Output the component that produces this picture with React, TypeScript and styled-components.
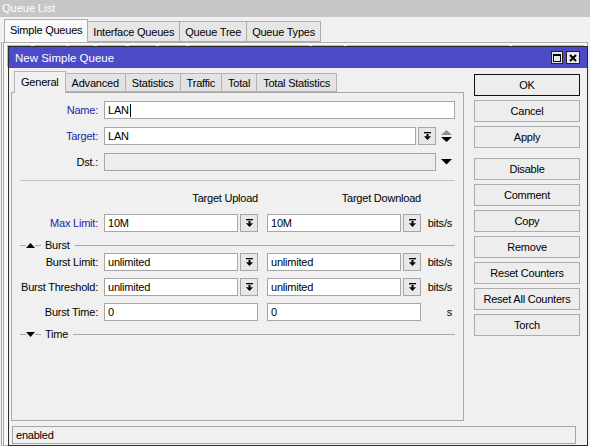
import React from 'react';
import styled, { createGlobalStyle } from 'styled-components';

const GlobalStyle = createGlobalStyle`
  html, body {
    margin: 0;
    padding: 0;
    background: #f0f0f0;
  }
  body {
    font-family: "Liberation Sans", Arial, sans-serif;
    font-size: 11px;
    letter-spacing: -0.22px;
    color: #000;
  }
`;

const Screen = styled.div`
  position: relative;
  width: 590px;
  height: 446px;
  overflow: hidden;
  background: #f0f0f0;
`;

/* ---------- Queue List window (behind) ---------- */
const ListWindow = styled.div`
  display: flex;
  flex-direction: column;
  height: 100%;
`;

const ListTitle = styled.div`
  height: 17px;
  line-height: 17px;
  padding-left: 2px;
  background: #c6c6c6;
  color: #fff;
  letter-spacing: 0;
`;

const TabStrip = styled.div<{ $inset: number }>`
  display: flex;
  align-items: flex-end;
  padding-left: ${(p) => p.$inset}px;
`;

const OuterTabs = styled(TabStrip)`
  height: 25px;
`;

const OuterTab = styled.div<{ $active?: boolean }>`
  height: ${(p) => (p.$active ? 23 : 21)}px;
  line-height: ${(p) => (p.$active ? 21 : 20)}px;
  padding: 0 5px;
  box-sizing: border-box;
  border: 1px solid #acacac;
  border-bottom: ${(p) => (p.$active ? 'none' : '1px solid #acacac')};
  background: ${(p) => (p.$active ? '#f9f9f9' : '#e6e6e6')};
  margin-right: -1px;
  position: relative;
  z-index: ${(p) => (p.$active ? 1 : 0)};
`;

const ListBody = styled.div`
  flex: 1;
  margin: 0 2px 0 1px;
  border: 1px solid #acacac;
  border-left: 3px double #a8a8a8;
  background: #f9f9f9;
`;

const ListToolbar = styled.div`
  display: flex;
  gap: 3px;
  padding: 2px 3px;
`;

const ToolBtn = styled.div<{ $w: number }>`
  width: ${(p) => p.$w}px;
  height: 20px;
  border: 1px solid #b8b8b8;
  background: #ececec;
`;

/* ---------- dialog ---------- */
const Dialog = styled.div`
  position: absolute;
  left: 8px;
  top: 46px;
  width: 580px;
  height: 400px;
  box-sizing: border-box;
  border: 1px solid #2c2c2c;
  background: #f0f0f0;
  display: flex;
  flex-direction: column;
`;

const TitleBar = styled.div`
  height: 21px;
  flex: none;
  background: #4b4bc8;
  color: #fff;
  display: flex;
  align-items: center;
  justify-content: space-between;
  padding: 0 7px 0 6px;
  font-size: 11.5px;
  letter-spacing: 0;
`;

const WinControls = styled.div`
  display: flex;
  gap: 3px;
`;

const WinBtn = styled.div<{ $w: number }>`
  width: ${(p) => p.$w}px;
  height: 13px;
  box-sizing: border-box;
  border: 1px solid #222;
  background: #e9e9e9;
  display: flex;
  align-items: center;
  justify-content: center;
`;

const DialogBody = styled.div`
  flex: 1;
  display: grid;
  grid-template-columns: 453px 106px;
  grid-template-rows: auto auto;
  column-gap: 10px;
  padding: 3px 7px 1px 2px;
`;

const LeftCol = styled.div`
  display: flex;
  flex-direction: column;
`;

const DialogTabs = styled(TabStrip)`
  height: 21px;
`;

const DialogTab = styled.div<{ $active?: boolean }>`
  height: ${(p) => (p.$active ? 22 : 19)}px;
  line-height: ${(p) => (p.$active ? 20 : 18)}px;
  padding: 0 6px;
  box-sizing: border-box;
  border: 1px solid #b3b3b3;
  border-bottom: ${(p) => (p.$active ? 'none' : '1px solid #b3b3b3')};
  background: ${(p) => (p.$active ? '#f0f0f0' : '#e3e3e3')};
  margin-right: -1px;
  margin-bottom: ${(p) => (p.$active ? -1 : 0)}px;
  position: relative;
  z-index: ${(p) => (p.$active ? 1 : 0)};
`;

const Panel = styled.div`
  height: 329px;
  box-sizing: border-box;
  border: 1px solid #a9a9a9;
  background: #f0f0f0;
  padding: 8px 8px 0 6px;
  display: flex;
  flex-direction: column;
`;

const Row = styled.div<{ $top?: number }>`
  display: flex;
  align-items: center;
  height: 18px;
  margin-top: ${(p) => p.$top ?? 0}px;
`;

const Label = styled.div<{ $blue?: boolean }>`
  width: 80px;
  margin-right: 6px;
  text-align: right;
  white-space: nowrap;
  color: ${(p) => (p.$blue ? '#1f1fa6' : '#000')};
`;

const Field = styled.div<{ $w?: number }>`
  display: flex;
  gap: 2px;
  height: 18px;
  ${(p) => (p.$w ? `width: ${p.$w}px;` : 'flex: 1;')}
`;

const Input = styled.div<{ $disabled?: boolean }>`
  flex: 1;
  height: 18px;
  box-sizing: border-box;
  border: 1px solid #a6a6a6;
  background: ${(p) => (p.$disabled ? '#ededed' : '#fff')};
  padding: 0 3px;
  line-height: 16px;
  display: flex;
  align-items: center;
  white-space: nowrap;
  overflow: hidden;
`;

const Caret = styled.span`
  display: inline-block;
  width: 1px;
  height: 13px;
  background: #000;
  margin-left: 1px;
`;

const DropBtn = styled.div`
  width: 18px;
  height: 18px;
  box-sizing: border-box;
  border: 1px solid #a6a6a6;
  background: #e7e7e7;
  display: flex;
  align-items: center;
  justify-content: center;
`;

const SideIcon = styled.div`
  width: 19px;
  height: 18px;
  padding-left: 5px;
  box-sizing: border-box;
  display: flex;
  align-items: center;
`;

const Gap = styled.div<{ $w: number }>`
  width: ${(p) => p.$w}px;
  flex: none;
`;

const Unit = styled.div`
  width: 29px;
  padding-right: 3px;
  box-sizing: border-box;
  text-align: right;
`;

const ColHead = styled.div`
  width: 154px;
  text-align: right;
`;

const Separator = styled.div<{ $top: number }>`
  height: 1px;
  margin: ${(p) => p.$top}px 0 0 2px;
  background: #c4c4c4;
`;

const Section = styled.div<{ $top: number }>`
  display: flex;
  align-items: center;
  height: 12px;
  margin: ${(p) => p.$top}px 0 0 2px;
`;

const Rule = styled.div<{ $w?: number }>`
  height: 1px;
  background: #a8a8a8;
  ${(p) => (p.$w ? `width: ${p.$w}px;` : 'flex: 1;')}
`;

const SectionText = styled.span`
  margin: 0 5px 0 4px;
`;

const Buttons = styled.div`
  display: flex;
  flex-direction: column;
  padding-top: 3px;
`;

const Button = styled.div<{ $default?: boolean; $top?: number }>`
  height: 22px;
  box-sizing: border-box;
  margin-top: ${(p) => p.$top ?? 4}px;
  border: 1px solid ${(p) => (p.$default ? '#111' : '#acacac')};
  background: #ededed;
  display: flex;
  align-items: center;
  justify-content: center;
`;

const StatusBar = styled.div`
  grid-column: 1 / -1;
  height: 18px;
  box-sizing: border-box;
  margin: 5px 4px 0 1px;
  border: 1px solid #a6a6a6;
  padding-left: 3px;
  line-height: 16px;
`;

/* ---------- icons ---------- */
const DropIcon = () => (
  <svg width="7" height="8" viewBox="0 0 7 8">
    <rect x="0" y="0" width="7" height="1.3" fill="#000" />
    <rect x="2.5" y="2" width="2" height="2.5" fill="#000" />
    <path d="M0 4.2 H7 L3.5 8 Z" fill="#000" />
  </svg>
);

const UpDownIcon = () => (
  <svg width="11" height="14" viewBox="0 0 11 14">
    <path d="M0 6 L5.5 1 L11 6 Z" fill="#8e8e8e" />
    <path d="M0 8 H11 L5.5 13 Z" fill="#000" />
  </svg>
);

const DownIcon = () => (
  <svg width="11" height="6" viewBox="0 0 11 6">
    <path d="M0 0 H11 L5.5 5.5 Z" fill="#000" />
  </svg>
);

const UpIcon = () => (
  <svg width="9" height="5" viewBox="0 0 9 5">
    <path d="M0 5 L4.5 0 L9 5 Z" fill="#000" />
  </svg>
);

const SmallDown = () => (
  <svg width="9" height="5" viewBox="0 0 9 5">
    <path d="M0 0 H9 L4.5 5 Z" fill="#000" />
  </svg>
);

const MaxIcon = () => (
  <svg width="8" height="8" viewBox="0 0 8 8">
    <rect x="0.5" y="0.5" width="7" height="7" fill="none" stroke="#000" />
    <rect x="0.5" y="0.5" width="7" height="1.5" fill="#000" />
  </svg>
);

const CloseIcon = () => (
  <svg width="8" height="8" viewBox="0 0 8 8">
    <path d="M1 1 L7 7 M7 1 L1 7" stroke="#000" strokeWidth="2" />
  </svg>
);

const outerTabs = ['Simple Queues', 'Interface Queues', 'Queue Tree', 'Queue Types'];
const dialogTabs = ['General', 'Advanced', 'Statistics', 'Traffic', 'Total', 'Total Statistics'];
const toolWidths = [22, 30, 23, 27, 25, 25, 119, 30, 160, 70];

type Pair = { label: string; up: string; down: string; unit: string; drop: boolean; blue?: boolean; top: number };

const LimitRow = ({ label, up, down, unit, drop, blue, top }: Pair) => (
  <Row $top={top}>
    <Label $blue={blue}>{label}</Label>
    <Field $w={154}>
      <Input>{up}</Input>
      {drop && (
        <DropBtn>
          <DropIcon />
        </DropBtn>
      )}
    </Field>
    <Gap $w={9} />
    <Field $w={154}>
      <Input>{down}</Input>
      {drop && (
        <DropBtn>
          <DropIcon />
        </DropBtn>
      )}
    </Field>
    <Gap $w={5} />
    <Unit>{unit}</Unit>
  </Row>
);

const App = () => {
  return (
    <Screen>
      <GlobalStyle />
      <ListWindow>
        <ListTitle>Queue List</ListTitle>
        <OuterTabs $inset={4}>
          {outerTabs.map((t, i) => (
            <OuterTab key={t} $active={i === 0}>
              {t}
            </OuterTab>
          ))}
        </OuterTabs>
        <ListBody>
          <ListToolbar>
            {toolWidths.map((w, i) => (
              <ToolBtn key={i} $w={w} />
            ))}
          </ListToolbar>
        </ListBody>
      </ListWindow>

      <Dialog>
        <TitleBar>
          <span>New Simple Queue</span>
          <WinControls>
            <WinBtn $w={12}>
              <MaxIcon />
            </WinBtn>
            <WinBtn $w={14}>
              <CloseIcon />
            </WinBtn>
          </WinControls>
        </TitleBar>

        <DialogBody>
          <LeftCol>
            <DialogTabs $inset={3}>
              {dialogTabs.map((t, i) => (
                <DialogTab key={t} $active={i === 0}>
                  {t}
                </DialogTab>
              ))}
            </DialogTabs>
            <Panel>
              <Row>
                <Label $blue>Name:</Label>
                <Field>
                  <Input>
                    LAN
                    <Caret />
                  </Input>
                </Field>
              </Row>
              <Row $top={8}>
                <Label $blue>Target:</Label>
                <Field>
                  <Input>LAN</Input>
                  <DropBtn>
                    <DropIcon />
                  </DropBtn>
                </Field>
                <SideIcon>
                  <UpDownIcon />
                </SideIcon>
              </Row>
              <Row $top={8}>
                <Label>Dst.:</Label>
                <Field>
                  <Input $disabled />
                </Field>
                <SideIcon>
                  <DownIcon />
                </SideIcon>
              </Row>

              <Separator $top={9} />

              <Row $top={8}>
                <Gap $w={86} />
                <ColHead>Target Upload</ColHead>
                <Gap $w={9} />
                <ColHead>Target Download</ColHead>
              </Row>
              <LimitRow label="Max Limit:" up="10M" down="10M" unit="bits/s" drop blue top={7} />

              <Section $top={7}>
                <Rule $w={6} />
                <UpIcon />
                <Rule $w={6} />
                <SectionText>Burst</SectionText>
                <Rule />
              </Section>
              <LimitRow label="Burst Limit:" up="unlimited" down="unlimited" unit="bits/s" drop top={2} />
              <LimitRow label="Burst Threshold:" up="unlimited" down="unlimited" unit="bits/s" drop top={7} />
              <LimitRow label="Burst Time:" up="0" down="0" unit="s" drop={false} top={7} />

              <Section $top={7}>
                <Rule $w={6} />
                <SmallDown />
                <Rule $w={6} />
                <SectionText>Time</SectionText>
                <Rule />
              </Section>
            </Panel>
          </LeftCol>

          <Buttons>
            <Button $default $top={0}>OK</Button>
            <Button>Cancel</Button>
            <Button>Apply</Button>
            <Button $top={10}>Disable</Button>
            <Button>Comment</Button>
            <Button>Copy</Button>
            <Button>Remove</Button>
            <Button>Reset Counters</Button>
            <Button>Reset All Counters</Button>
            <Button>Torch</Button>
          </Buttons>

          <StatusBar>enabled</StatusBar>
        </DialogBody>
      </Dialog>
    </Screen>
  );
};

export default App;
